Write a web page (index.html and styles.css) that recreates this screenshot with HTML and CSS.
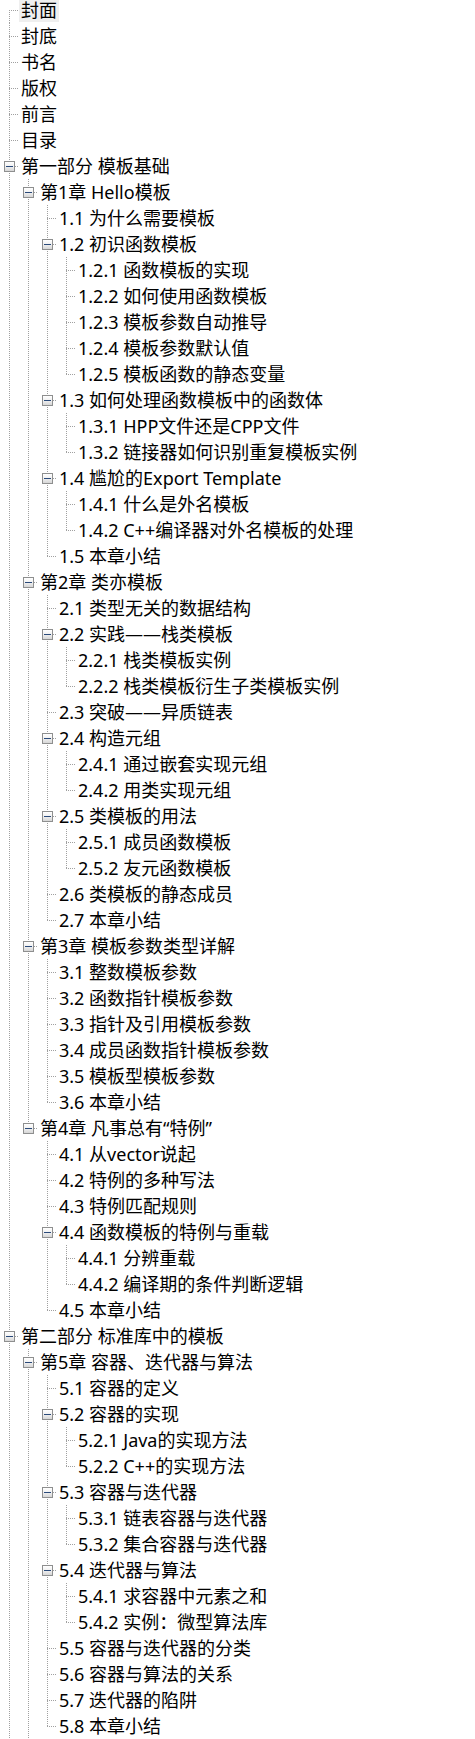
FILE: index.html
```html
<!DOCTYPE html>
<html lang="zh-CN">
<head>
<meta charset="utf-8">
<title>目录</title>
<link rel="stylesheet" href="styles.css">
</head>
<body>
<ul class="tree">
  <li class="node first"><div class="row"><span class="twig"></span><span class="label sel">封面</span></div></li>
  <li class="node"><div class="row"><span class="twig"></span><span class="label">封底</span></div></li>
  <li class="node"><div class="row"><span class="twig"></span><span class="label">书名</span></div></li>
  <li class="node"><div class="row"><span class="twig"></span><span class="label">版权</span></div></li>
  <li class="node"><div class="row"><span class="twig"></span><span class="label">前言</span></div></li>
  <li class="node"><div class="row"><span class="twig"></span><span class="label">目录</span></div></li>
  <li class="node">
    <div class="row"><span class="twig"><span class="box"></span></span><span class="label">第一部分 模板基础</span></div>
    <ul class="sub">
      <li class="node">
        <div class="row"><span class="twig"><span class="box"></span></span><span class="label">第1章 Hello模板</span></div>
        <ul class="sub">
          <li class="node"><div class="row"><span class="twig"></span><span class="label">1.1 为什么需要模板</span></div></li>
          <li class="node">
            <div class="row"><span class="twig"><span class="box"></span></span><span class="label">1.2 初识函数模板</span></div>
            <ul class="sub">
              <li class="node"><div class="row"><span class="twig"></span><span class="label">1.2.1 函数模板的实现</span></div></li>
              <li class="node"><div class="row"><span class="twig"></span><span class="label">1.2.2 如何使用函数模板</span></div></li>
              <li class="node"><div class="row"><span class="twig"></span><span class="label">1.2.3 模板参数自动推导</span></div></li>
              <li class="node"><div class="row"><span class="twig"></span><span class="label">1.2.4 模板参数默认值</span></div></li>
              <li class="node"><div class="row"><span class="twig"></span><span class="label">1.2.5 模板函数的静态变量</span></div></li>
            </ul>
          </li>
          <li class="node">
            <div class="row"><span class="twig"><span class="box"></span></span><span class="label">1.3 如何处理函数模板中的函数体</span></div>
            <ul class="sub">
              <li class="node"><div class="row"><span class="twig"></span><span class="label">1.3.1 HPP文件还是CPP文件</span></div></li>
              <li class="node"><div class="row"><span class="twig"></span><span class="label">1.3.2 链接器如何识别重复模板实例</span></div></li>
            </ul>
          </li>
          <li class="node">
            <div class="row"><span class="twig"><span class="box"></span></span><span class="label">1.4 尴尬的Export Template</span></div>
            <ul class="sub">
              <li class="node"><div class="row"><span class="twig"></span><span class="label">1.4.1 什么是外名模板</span></div></li>
              <li class="node"><div class="row"><span class="twig"></span><span class="label">1.4.2 C++编译器对外名模板的处理</span></div></li>
            </ul>
          </li>
          <li class="node"><div class="row"><span class="twig"></span><span class="label">1.5 本章小结</span></div></li>
        </ul>
      </li>
      <li class="node">
        <div class="row"><span class="twig"><span class="box"></span></span><span class="label">第2章 类亦模板</span></div>
        <ul class="sub">
          <li class="node"><div class="row"><span class="twig"></span><span class="label">2.1 类型无关的数据结构</span></div></li>
          <li class="node">
            <div class="row"><span class="twig"><span class="box"></span></span><span class="label">2.2 实践——栈类模板</span></div>
            <ul class="sub">
              <li class="node"><div class="row"><span class="twig"></span><span class="label">2.2.1 栈类模板实例</span></div></li>
              <li class="node"><div class="row"><span class="twig"></span><span class="label">2.2.2 栈类模板衍生子类模板实例</span></div></li>
            </ul>
          </li>
          <li class="node"><div class="row"><span class="twig"></span><span class="label">2.3 突破——异质链表</span></div></li>
          <li class="node">
            <div class="row"><span class="twig"><span class="box"></span></span><span class="label">2.4 构造元组</span></div>
            <ul class="sub">
              <li class="node"><div class="row"><span class="twig"></span><span class="label">2.4.1 通过嵌套实现元组</span></div></li>
              <li class="node"><div class="row"><span class="twig"></span><span class="label">2.4.2 用类实现元组</span></div></li>
            </ul>
          </li>
          <li class="node">
            <div class="row"><span class="twig"><span class="box"></span></span><span class="label">2.5 类模板的用法</span></div>
            <ul class="sub">
              <li class="node"><div class="row"><span class="twig"></span><span class="label">2.5.1 成员函数模板</span></div></li>
              <li class="node"><div class="row"><span class="twig"></span><span class="label">2.5.2 友元函数模板</span></div></li>
            </ul>
          </li>
          <li class="node"><div class="row"><span class="twig"></span><span class="label">2.6 类模板的静态成员</span></div></li>
          <li class="node"><div class="row"><span class="twig"></span><span class="label">2.7 本章小结</span></div></li>
        </ul>
      </li>
      <li class="node">
        <div class="row"><span class="twig"><span class="box"></span></span><span class="label">第3章 模板参数类型详解</span></div>
        <ul class="sub">
          <li class="node"><div class="row"><span class="twig"></span><span class="label">3.1 整数模板参数</span></div></li>
          <li class="node"><div class="row"><span class="twig"></span><span class="label">3.2 函数指针模板参数</span></div></li>
          <li class="node"><div class="row"><span class="twig"></span><span class="label">3.3 指针及引用模板参数</span></div></li>
          <li class="node"><div class="row"><span class="twig"></span><span class="label">3.4 成员函数指针模板参数</span></div></li>
          <li class="node"><div class="row"><span class="twig"></span><span class="label">3.5 模板型模板参数</span></div></li>
          <li class="node"><div class="row"><span class="twig"></span><span class="label">3.6 本章小结</span></div></li>
        </ul>
      </li>
      <li class="node">
        <div class="row"><span class="twig"><span class="box"></span></span><span class="label">第4章 凡事总有“特例”</span></div>
        <ul class="sub">
          <li class="node"><div class="row"><span class="twig"></span><span class="label">4.1 从vector说起</span></div></li>
          <li class="node"><div class="row"><span class="twig"></span><span class="label">4.2 特例的多种写法</span></div></li>
          <li class="node"><div class="row"><span class="twig"></span><span class="label">4.3 特例匹配规则</span></div></li>
          <li class="node">
            <div class="row"><span class="twig"><span class="box"></span></span><span class="label">4.4 函数模板的特例与重载</span></div>
            <ul class="sub">
              <li class="node"><div class="row"><span class="twig"></span><span class="label">4.4.1 分辨重载</span></div></li>
              <li class="node"><div class="row"><span class="twig"></span><span class="label">4.4.2 编译期的条件判断逻辑</span></div></li>
            </ul>
          </li>
          <li class="node"><div class="row"><span class="twig"></span><span class="label">4.5 本章小结</span></div></li>
        </ul>
      </li>
    </ul>
  </li>
  <li class="node more">
    <div class="row"><span class="twig"><span class="box"></span></span><span class="label">第二部分 标准库中的模板</span></div>
    <ul class="sub">
      <li class="node more">
        <div class="row"><span class="twig"><span class="box"></span></span><span class="label">第5章 容器、迭代器与算法</span></div>
        <ul class="sub">
          <li class="node"><div class="row"><span class="twig"></span><span class="label">5.1 容器的定义</span></div></li>
          <li class="node">
            <div class="row"><span class="twig"><span class="box"></span></span><span class="label">5.2 容器的实现</span></div>
            <ul class="sub">
              <li class="node"><div class="row"><span class="twig"></span><span class="label">5.2.1 Java的实现方法</span></div></li>
              <li class="node"><div class="row"><span class="twig"></span><span class="label">5.2.2 C++的实现方法</span></div></li>
            </ul>
          </li>
          <li class="node">
            <div class="row"><span class="twig"><span class="box"></span></span><span class="label">5.3 容器与迭代器</span></div>
            <ul class="sub">
              <li class="node"><div class="row"><span class="twig"></span><span class="label">5.3.1 链表容器与迭代器</span></div></li>
              <li class="node"><div class="row"><span class="twig"></span><span class="label">5.3.2 集合容器与迭代器</span></div></li>
            </ul>
          </li>
          <li class="node">
            <div class="row"><span class="twig"><span class="box"></span></span><span class="label">5.4 迭代器与算法</span></div>
            <ul class="sub">
              <li class="node"><div class="row"><span class="twig"></span><span class="label">5.4.1 求容器中元素之和</span></div></li>
              <li class="node"><div class="row"><span class="twig"></span><span class="label">5.4.2 实例：微型算法库</span></div></li>
            </ul>
          </li>
          <li class="node"><div class="row"><span class="twig"></span><span class="label">5.5 容器与迭代器的分类</span></div></li>
          <li class="node"><div class="row"><span class="twig"></span><span class="label">5.6 容器与算法的关系</span></div></li>
          <li class="node"><div class="row"><span class="twig"></span><span class="label">5.7 迭代器的陷阱</span></div></li>
          <li class="node"><div class="row"><span class="twig"></span><span class="label">5.8 本章小结</span></div></li>
        </ul>
      </li>
    </ul>
  </li>
</ul>
</body>
</html>
```

FILE: styles.css
```css
html {
  background: #ffffff;
}

body {
  margin: 0;
  background: #ffffff;
  color: #000000;
  font-family: "Noto Sans", "Noto Sans CJK SC", sans-serif;
  font-size: 18px;
  overflow: hidden;
}

.tree {
  list-style: none;
  margin: -3px 0 0 0;
  padding: 0;
}

.sub {
  list-style: none;
  margin: 0 0 0 19px;
  padding: 0;
}

.node {
  background-image: repeating-linear-gradient(to bottom, #a0a0a0 0 1px, transparent 1px 2px);
  background-repeat: no-repeat;
  background-position: 9px 0;
  background-size: 1px 100%;
}

.node:last-child {
  background-size: 1px 14px;
}

.node.more {
  background-size: 1px 100%;
}

.node.first {
  background-position: 9px 13px;
}

.row {
  display: flex;
  height: 26px;
}

.twig {
  flex: none;
  width: 19px;
  height: 26px;
  display: flex;
  align-items: flex-start;
  background-image: repeating-linear-gradient(to right, #a0a0a0 0 1px, transparent 1px 2px);
  background-repeat: no-repeat;
  background-position: 9px 13px;
  background-size: 10px 1px;
}

.box {
  box-sizing: border-box;
  width: 11px;
  height: 11px;
  margin: 8px 0 0 4px;
  border: 1px solid #8e8f8f;
  background: linear-gradient(to bottom, #ffffff 0%, #f0f0f0 50%, #d6d6d6 100%);
  display: flex;
  align-items: center;
  justify-content: center;
}

.box::before {
  content: "";
  width: 7px;
  height: 1px;
  background: #2a4a7a;
}

.label {
  height: 24px;
  margin-top: 1px;
  line-height: 24px;
  padding: 0 2px;
  white-space: nowrap;
}

.label.sel {
  background: #efefef;
}
```
